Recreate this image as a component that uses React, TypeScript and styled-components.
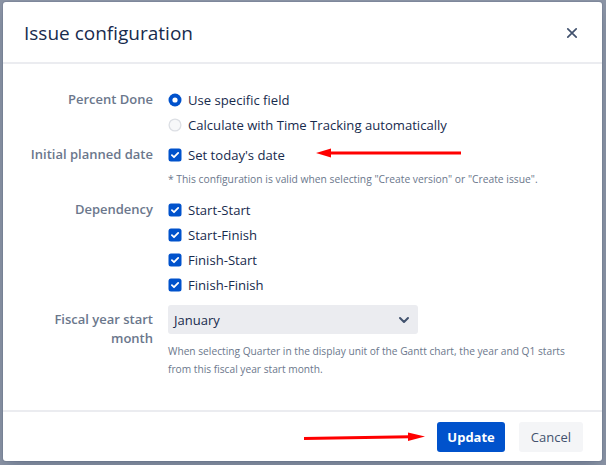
import styled, { createGlobalStyle } from "styled-components"

const GlobalStyle = createGlobalStyle`
    html, body {
        margin: 0;
        padding: 0;
        background: #8b94a5;
    }
    * {
        box-sizing: border-box;
    }
`

const Backdrop = styled.div`
    width: 606px;
    height: 465px;
    padding: 2px 4px 4px 3px;
    font-family: "Open Sans", "Noto Sans", sans-serif;
    color: #172b4d;
`
const Modal = styled.div`
    position: relative;
    height: 459px;
    background: #fff;
    border-radius: 3px;
    display: flex;
    flex-direction: column;
    box-shadow: 0 0 0 1px rgba(9, 30, 66, 0.08), 0 8px 16px -4px rgba(9, 30, 66, 0.25);
`
const Header = styled.div`
    height: 62px;
    display: flex;
    align-items: center;
    justify-content: space-between;
    padding: 0 22px 0 21px;
    border-bottom: 2px solid #ebecf0;
`
const Title = styled.h1`
    margin: 0;
    font-size: 19px;
    font-weight: 400;
    color: #172b4d;
    padding-top: 2px;
`
const CloseBtn = styled.button`
    border: none;
    background: none;
    padding: 0;
    width: 16px;
    height: 16px;
    display: flex;
    align-items: center;
    justify-content: center;
    color: #42526e;
    cursor: pointer;
    margin-top: 2px;
`
const Body = styled.div`
    flex: 1;
    padding: 23px 20px 0 0;
`
const Field = styled.div<{ $gap?: number }>`
    display: grid;
    grid-template-columns: 150px 1fr;
    column-gap: 15px;
    margin-bottom: ${p => p.$gap ?? 5}px;
`
const Label = styled.div<{ $top?: number }>`
    text-align: right;
    font-size: 13px;
    font-weight: 600;
    color: #6b778c;
    line-height: 19px;
    padding-top: ${p => p.$top ?? 3}px;
`
const Options = styled.div`
    display: flex;
    flex-direction: column;
`
const Option = styled.label`
    height: 25px;
    display: flex;
    align-items: center;
    gap: 6px;
    font-size: 13.1px;
    color: #172b4d;
    cursor: pointer;
`
const Note = styled.div<{ $lh?: number; $size?: number }>`
    font-size: ${p => p.$size ?? 10.3}px;
    color: #6b778c;
    line-height: ${p => p.$lh ?? 25}px;
`
const Select = styled.div`
    width: 250px;
    height: 29px;
    background: #ebecf0;
    border-radius: 3px;
    display: flex;
    align-items: center;
    justify-content: space-between;
    padding: 0 7px 0 6px;
    font-size: 13px;
    color: #172b4d;
`
const Help = styled(Note)`
    margin-top: 8px;
`
const Footer = styled.div`
    height: 51px;
    border-top: 2px solid #ebecf0;
    display: flex;
    align-items: flex-start;
    justify-content: flex-end;
    gap: 14px;
    padding: 10px 19px 0 0;
`
const Button = styled.button<{ $primary?: boolean }>`
    height: 30px;
    border: none;
    border-radius: 3px;
    padding: 0 ${p => (p.$primary ? 10 : 12)}px;
    font-family: inherit;
    font-size: 13px;
    font-weight: ${p => (p.$primary ? 700 : 400)};
    background: ${p => (p.$primary ? "#0052cc" : "#f4f5f7")};
    color: ${p => (p.$primary ? "#fff" : "#42526e")};
    cursor: pointer;
`
const Arrow = styled.svg`
    position: absolute;
    pointer-events: none;
`

function Radio({ checked }: { checked?: boolean }) {
    return checked ? (
        <svg width="14" height="14" viewBox="0 0 14 14">
            <circle cx="7" cy="7" r="6.5" fill="#0052cc" />
            <circle cx="7" cy="7" r="2.6" fill="#fff" />
        </svg>
    ) : (
        <svg width="14" height="14" viewBox="0 0 14 14">
            <circle cx="7" cy="7" r="5.9" fill="#f7f8f9" stroke="#dcdfe4" strokeWidth="1.3" />
        </svg>
    )
}

function Check() {
    return (
        <svg width="14" height="14" viewBox="0 0 14 14">
            <rect x="0.5" y="0.5" width="13" height="13" rx="2.5" fill="#0052cc" />
            <path d="M3.9 7.2 L6 9.2 L10.2 4.9" fill="none" stroke="#fff" strokeWidth="1.8" strokeLinecap="round" strokeLinejoin="round" />
        </svg>
    )
}

const dependencies = ["Start-Start", "Start-Finish", "Finish-Start", "Finish-Finish"]

export default function App() {
    return (
        <>
            <GlobalStyle />
            <Backdrop>
                <Modal>
                    <Header>
                        <Title>Issue configuration</Title>
                        <CloseBtn aria-label="Close">
                            <svg width="12" height="12" viewBox="0 0 12 12">
                                <path d="M1.8 1.8 L10.2 10.2 M10.2 1.8 L1.8 10.2" stroke="currentColor" strokeWidth="1.7" strokeLinecap="round" />
                            </svg>
                        </CloseBtn>
                    </Header>
                    <Body>
                        <Field>
                            <Label>Percent Done</Label>
                            <Options>
                                <Option><Radio checked />Use specific field</Option>
                                <Option><Radio />Calculate with Time Tracking automatically</Option>
                            </Options>
                        </Field>
                        <Field>
                            <Label>Initial planned date</Label>
                            <Options>
                                <Option><Check />Set today's date</Option>
                                <Note>* This configuration is valid when selecting "Create version" or "Create issue".</Note>
                            </Options>
                        </Field>
                        <Field $gap={8}>
                            <Label>Dependency</Label>
                            <Options>
                                {dependencies.map(d => (
                                    <Option key={d}><Check />{d}</Option>
                                ))}
                            </Options>
                        </Field>
                        <Field>
                            <Label $top={5}>Fiscal year start<br />month</Label>
                            <Options>
                                <Select>
                                    January
                                    <svg width="14" height="14" viewBox="0 0 14 14">
                                        <path d="M3 5 L7 9 L11 5" fill="none" stroke="#42526e" strokeWidth="2" strokeLinecap="round" strokeLinejoin="round" />
                                    </svg>
                                </Select>
                                <Help $lh={18} $size={10.2}>When selecting Quarter in the display unit of the Gantt chart, the year and Q1 starts<br />from this fiscal year start month.</Help>
                            </Options>
                        </Field>
                    </Body>
                    <Footer>
                        <Button $primary>Update</Button>
                        <Button>Cancel</Button>
                    </Footer>
                    <Arrow width="150" height="14" viewBox="0 0 150 14" style={{ left: 311, top: 144 }}>
                        <path d="M16 7 L147 7" stroke="#f00" strokeWidth="3" />
                        <path d="M2 7 L17 2.5 L17 11.5 Z" fill="#f00" />
                    </Arrow>
                    <Arrow width="126" height="14" viewBox="0 0 126 14" style={{ left: 299, top: 428 }}>
                        <path d="M2 8.5 L108 6.8" stroke="#f00" strokeWidth="3" />
                        <path d="M123 6.6 L106 2.5 L106 11 Z" fill="#f00" />
                    </Arrow>
                </Modal>
            </Backdrop>
        </>
    )
}
